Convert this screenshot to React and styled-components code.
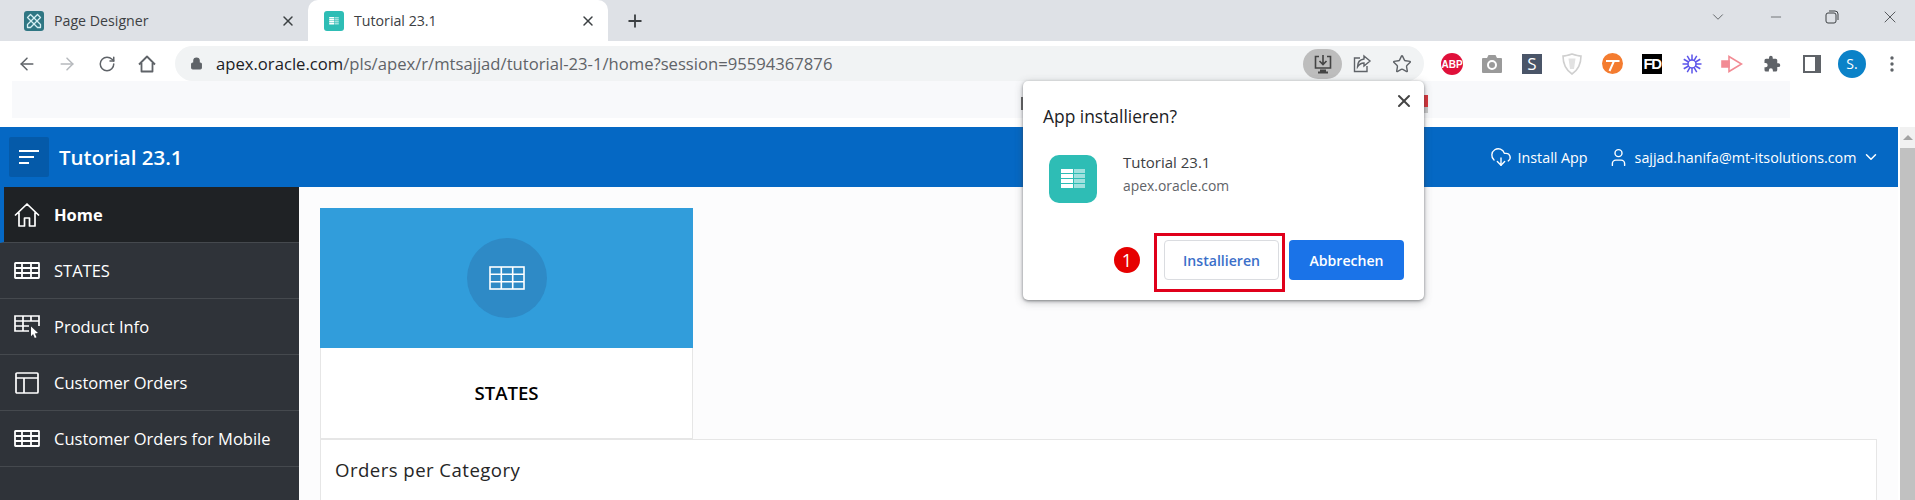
import React from 'react';
import styled, { createGlobalStyle } from 'styled-components';
import { ArrowLeft, ArrowRight, RotateCw, Lock, Star, X, Plus, ChevronDown, Minus, CloudDownload, User } from 'lucide-react';

const GlobalStyle = createGlobalStyle`
    html, body {
        margin: 0;
        padding: 0;
        height: 500px;
        overflow: hidden;
        background: #fff;
        font-family: "Open Sans", "Liberation Sans", sans-serif;
    }
    * {
        box-sizing: border-box;
    }
`;

const Screen = styled.div`
    position: relative;
    width: 1915px;
    height: 500px;
    overflow: hidden;
`;

/* browser tabs */
const TabStrip = styled.div`
    display: flex;
    align-items: stretch;
    height: 41px;
    background: #dee1e6;
    padding-left: 8px;
`;

const Tab = styled.div`
    display: flex;
    align-items: center;
    width: 300px;
    padding: 0 12px 0 16px;
    font-size: 14.2px;
    color: #3c4043;
    background: ${p => (p.$active ? '#fff' : 'transparent')};
    border-radius: 10px 10px 0 0;
`;

const TabTitle = styled.span`
    flex: 1;
    margin-left: 10px;
`;

const Favicon = styled.div`
    display: flex;
    align-items: center;
    justify-content: center;
    width: 20px;
    height: 20px;
    border-radius: 3px;
    background: ${p => p.$color};
`;

const NewTab = styled.div`
    display: flex;
    align-items: center;
    margin-left: 17px;
    color: #3c4043;
`;

const WindowControls = styled.div`
    display: flex;
    align-items: center;
    margin-left: auto;
    padding: 0 15px 7px 0;
    gap: 41px;
    color: #3c4043;
`;

/* address bar row */
const Toolbar = styled.div`
    display: flex;
    align-items: flex-start;
    height: 40px;
    padding: 5px 0 0 7px;
    background: #fff;
`;

const NavButton = styled.div`
    display: flex;
    align-items: center;
    justify-content: center;
    flex: none;
    width: 40px;
    height: 35px;
    color: ${p => (p.$muted ? '#b6b9bd' : '#5f6368')};
`;

const AddressBar = styled.div`
    display: flex;
    align-items: center;
    width: 1249px;
    height: 35px;
    margin: 0 8px;
    padding: 0 2px 0 15px;
    border-radius: 18px;
    background: #f1f3f4;
`;

const Url = styled.div`
    flex: 1;
    margin-left: 13px;
    font-size: 16.65px;
    color: #5f6368;
    white-space: nowrap;
    b {
        font-weight: 400;
        color: #202124;
    }
`;

const InstallPill = styled.div`
    display: flex;
    align-items: center;
    justify-content: center;
    width: 39px;
    height: 30px;
    border-radius: 15px;
    background: #bdbdbd;
`;

const BarIcon = styled.div`
    display: flex;
    align-items: center;
    justify-content: center;
    width: 40px;
    color: #5f6368;
`;

const Extensions = styled.div`
    display: flex;
`;

const Extension = styled.div`
    display: flex;
    align-items: center;
    justify-content: center;
    width: 40px;
    height: 35px;
`;

const Avatar = styled.div`
    display: flex;
    align-items: center;
    justify-content: center;
    width: 28px;
    height: 28px;
    border-radius: 50%;
    background: #0b82c8;
    color: #fff;
    font-size: 14px;
`;

const AdStrip = styled.div`
    position: relative;
    height: 46px;
    padding: 0 125px 9px 12px;
`;

const AdInner = styled.div`
    height: 100%;
    background: #f8f9fb;
`;

/* the bits of the page's banner that stick out beside the prompt */
const AdMark = styled.div`
    position: absolute;
    top: ${p => p.$top}px;
    left: ${p => p.$left}px;
    width: ${p => p.$w}px;
    height: ${p => p.$h}px;
    background: ${p => p.$color};
`;

/* page under the chrome */
const Viewport = styled.div`
    display: flex;
    height: 373px;
`;

const PageArea = styled.div`
    width: 1898px;
`;

const AppHeader = styled.header`
    display: flex;
    align-items: center;
    height: 60px;
    padding: 0 14px 0 9px;
    background: #0568c4;
    color: #fff;
`;

const MenuButton = styled.div`
    display: flex;
    align-items: center;
    justify-content: center;
    width: 40px;
    height: 40px;
    border-radius: 2px;
    background: #055aa9;
`;

const AppTitle = styled.div`
    margin-left: 10px;
    font-size: 20.5px;
    font-weight: 600;
`;

const HeaderLink = styled.div`
    display: flex;
    align-items: center;
    gap: 6px;
    margin-left: ${p => p.$offset || 0}px;
    font-size: 14.3px;
`;

const Body = styled.div`
    display: flex;
    height: 313px;
`;

const Sidebar = styled.nav`
    flex: none;
    width: 299px;
    background: #2f3339;
`;

const MenuRow = styled.div`
    display: flex;
    align-items: center;
    height: 56px;
    padding-left: ${p => (p.$active ? '10px' : '14px')};
    border-left: ${p => (p.$active ? '4px solid #0568c4' : '0')};
    border-bottom: 1px solid #45494e;
    background: ${p => (p.$active ? '#1f2225' : 'transparent')};
    color: #fff;
    font-size: 16.5px;
    font-weight: ${p => (p.$active ? 700 : 400)};
`;

const MenuIcon = styled.div`
    display: flex;
    align-items: center;
    justify-content: center;
    width: 26px;
    margin-right: 14px;
`;

const Content = styled.main`
    flex: 1;
    padding: 21px 21px 0;
    background: #fcfcfd;
`;

const Tile = styled.div`
    width: 373px;
    height: 231px;
    background: #fff;
    border: 1px solid #e6e6e6;
    border-top: 0;
`;

const TileBanner = styled.div`
    display: flex;
    align-items: center;
    justify-content: center;
    height: 140px;
    margin: 0 -1px;
    background: #319ddb;
`;

const TileCircle = styled.div`
    display: flex;
    align-items: center;
    justify-content: center;
    width: 80px;
    height: 80px;
    border-radius: 50%;
    background: #2e8ac6;
`;

const TileLabel = styled.div`
    padding-top: 33px;
    text-align: center;
    font-size: 18.6px;
    line-height: 24px;
    font-weight: 600;
    color: #000;
`;

const Region = styled.section`
    height: 120px;
    padding: 17px 14px;
    background: #fff;
    border: 1px solid #e6e6e6;
`;

const RegionTitle = styled.h2`
    margin: 0;
    font-size: 18.6px;
    line-height: 26px;
    font-weight: 500;
    letter-spacing: 0.45px;
    color: #262626;
`;

const Scrollbar = styled.div`
    width: 15px;
    margin-left: 2px;
    background: #c1c1c1;
`;

const ScrollUp = styled.div`
    display: flex;
    align-items: center;
    justify-content: center;
    height: 21px;
    background: #f1f1f1;
    &::before {
        content: '';
        border: 5px solid transparent;
        border-top: 0;
        border-bottom: 5px solid #a3a3a3;
    }
`;

/* install prompt, on top of everything */
const Dialog = styled.div`
    position: absolute;
    left: 1023px;
    top: 81px;
    width: 401px;
    height: 219px;
    padding: 23px 20px 0 20px;
    border-radius: 5px;
    background: #fff;
    box-shadow: 0 1px 3px rgba(60, 64, 67, 0.55), 0 2px 8px rgba(60, 64, 67, 0.3);
`;

const DialogClose = styled.div`
    position: absolute;
    top: 10px;
    right: 10px;
    display: flex;
    color: #444;
`;

const DialogTitle = styled.div`
    font-size: 17.4px;
    line-height: 24px;
    color: #202124;
`;

const AppRow = styled.div`
    display: flex;
    align-items: flex-start;
    height: 48px;
    margin: 27px 0 0 6px;
`;

const AppIcon = styled.div`
    display: flex;
    align-items: center;
    justify-content: center;
    width: 48px;
    height: 48px;
    border-radius: 10px;
    background: #2ebdb5;
`;

const AppText = styled.div`
    margin: -5px 0 0 26px;
`;

const AppName = styled.div`
    font-size: 15px;
    line-height: 24px;
    color: #3c4043;
`;

const AppHost = styled.div`
    font-size: 13.9px;
    line-height: 24px;
    color: #5f6368;
`;

const DialogActions = styled.div`
    display: flex;
    align-items: flex-start;
    justify-content: flex-end;
    margin-top: 30px;
`;

const StepBadge = styled.div`
    display: flex;
    align-items: center;
    justify-content: center;
    width: 26px;
    height: 26px;
    margin-top: 14px;
    border-radius: 50%;
    background: #e60000;
    color: #fff;
    font-size: 18px;
`;

const Highlight = styled.div`
    height: 59px;
    margin-left: 14px;
    padding: 4px 3px 0 7px;
    border: 3px solid #e0001b;
`;

const Button = styled.div`
    display: flex;
    align-items: center;
    justify-content: center;
    width: 115px;
    height: 40px;
    border-radius: 4px;
    font-size: 14.1px;
    font-weight: 600;
    color: ${p => (p.$primary ? '#fff' : '#3b6fc9')};
    background: ${p => (p.$primary ? '#1a73e8' : '#fff')};
    border: ${p => (p.$primary ? '0' : '1px solid #dadce0')};
`;

const CancelButton = styled(Button)`
    margin: 7px 0 0 4px;
`;

/* list glyph of the side menu: wide first column, thick rules */
const MenuTableGlyph = () => (
    <svg width="26" height="17" viewBox="0 0 26 17" fill="none" stroke="#fff" strokeWidth="1.8">
        <rect x="1" y="1" width="24" height="15" rx="0.5" />
        <path d="M1 6h24M1 11h24M8 1v15M17 1v15" />
    </svg>
);

const TileTableGlyph = () => (
    <svg width="36" height="24" viewBox="0 0 36 24" fill="none" stroke="#fff" strokeWidth="1.6">
        <rect x="1" y="1" width="34" height="22" />
        <path d="M1 8.300h34M1 15.700h34M12.300 1v22M23.700 1v22" />
    </svg>
);

const TinyTableGlyph = ({ width, height }) => (
    <svg width={width} height={height} viewBox="0 0 24 20" fill="#fff">
        <path d="M0 0h12v4H0zM0 5h12v4H0zM0 10h12v4H0zM0 15h12v4H0z" />
        <path d="M13 0h11v4H13zM13 5h11v4H13zM13 10h11v4H13zM13 15h11v4H13z" opacity="0.55" />
    </svg>
);

const HouseGlyph = () => (
    <svg width="26" height="24" viewBox="0 0 26 24" fill="none" stroke="#fff" strokeWidth="1.7" strokeLinejoin="round">
        <path d="M1 12.500L13 1l12 11.500M5 9.500V23h5.500v-8h5v8H21V9.500" />
    </svg>
);

const ToolbarHouseGlyph = () => (
    <svg width="18" height="18" viewBox="0 0 18 18" fill="none" stroke="#5f6368" strokeWidth="1.8" strokeLinejoin="round">
        <path d="M1 9.500L9 1.500l8 8M3.500 8v8.500h11V8" />
    </svg>
);

const CursorTableGlyph = () => (
    <svg width="26" height="24" viewBox="0 0 26 24" fill="none" stroke="#fff" strokeWidth="1.7">
        <path d="M15 16H1V1h24v10M1 6h24M1 11h14M9 1v15M17 1v5" />
        <path d="M17 11.500l7 6.500-3.200.4 1.700 3.800-1.700.8-1.700-3.900-2.100 2.200z" fill="#fff" stroke="none" />
    </svg>
);

const LayoutGlyph = () => (
    <svg width="24" height="22" viewBox="0 0 24 22" fill="none" stroke="#fff" strokeWidth="1.7">
        <rect x="1" y="1" width="22" height="20" rx="1" />
        <path d="M1 6h22M9 6v15" />
    </svg>
);

const InstallGlyph = () => (
    <svg width="20" height="20" viewBox="0 0 20 20" fill="none" stroke="#444" strokeWidth="1.6">
        <path d="M6 2.500H2.500V14h15V2.500H14" />
        <path d="M10 1v9M6.500 7l3.500 3.500L13.500 7" />
        <path d="M5 18.500h10M7 16.500h6" strokeWidth="2" />
    </svg>
);

const ShareGlyph = () => (
    <svg width="20" height="20" viewBox="0 0 20 20" fill="none" stroke="#5f6368" strokeWidth="1.4">
        <path d="M8 4H2.500v13.500H15V12" />
        <path d="M12 2l6 5-6 5V9C9 9 7 10.500 5.500 13c0-5 2.500-7.500 6.500-8z" />
    </svg>
);

const AbpGlyph = () => (
    <svg width="22" height="22" viewBox="0 0 22 22">
        <circle cx="11" cy="11" r="11" fill="#e0103a" />
        <text x="11" y="14.500" textAnchor="middle" fontSize="10" fontWeight="700" fill="#fff" fontFamily="Liberation Sans">ABP</text>
    </svg>
);

const CameraGlyph = () => (
    <svg width="20" height="18" viewBox="0 0 20 18">
        <path d="M1 3h4l1.500-3h7L15 3h4a1 1 0 0 1 1 1v13a1 1 0 0 1-1 1H1a1 1 0 0 1-1-1V4a1 1 0 0 1 1-1z" fill="#9a9a9a" />
        <circle cx="10" cy="10" r="4" fill="none" stroke="#fff" strokeWidth="2" />
    </svg>
);

const SquareS = styled.div`
    display: flex;
    align-items: center;
    justify-content: center;
    width: 20px;
    height: 20px;
    background: #4a5568;
    color: #fff;
    font-size: 17px;
`;

const ShieldGlyph = () => (
    <svg width="20" height="22" viewBox="0 0 20 22" fill="none" stroke="#cfcfcf" strokeWidth="1.6">
        <path d="M1 3c3 0 6-1 9-2 3 1 6 2 9 2 0 8-3 14-9 18C4 17 1 11 1 3z" />
        <path d="M6.500 5.500h7L12 16H8z" fill="#e2e2e2" stroke="none" />
    </svg>
);

const TGlyph = () => (
    <svg width="21" height="21" viewBox="0 0 21 21">
        <circle cx="10.500" cy="10.500" r="10.500" fill="#f47c30" />
        <path d="M4 8h13.500M12 8L7.500 18" fill="none" stroke="#fff" strokeWidth="2" />
    </svg>
);

const FdBox = styled.div`
    display: flex;
    align-items: center;
    justify-content: center;
    width: 20px;
    height: 20px;
    background: #000;
    color: #fff;
    font: 700 15px/1 "Liberation Sans", sans-serif;
    letter-spacing: -1.5px;
`;

const spokes = Array.from({ length: 12 }, (_, i) => i * 30);

const BurstGlyph = () => (
    <svg width="20" height="20" viewBox="0 0 20 20" fill="none" stroke="#5b54ea" strokeWidth="2">
        <circle cx="10" cy="10" r="4" strokeWidth="1.500" />
        {spokes.map(deg => <path key={deg} d="M10 0.500V6" transform={`rotate(${deg} 10 10)`} strokeWidth="1.500" />)}
    </svg>
);

const ArrowTagGlyph = () => (
    <svg width="22" height="18" viewBox="0 0 22 18" fill="none" stroke="#f28b94" strokeWidth="1.6">
        <path d="M1 6h7v6H1z" fill="#f28b94" />
        <path d="M8 1.500L20.500 9 8 16.500z" />
    </svg>
);

const PuzzleGlyph = () => (
    <svg width="18" height="18" viewBox="0 0 24 24" fill="#5f6368">
        <path d="M20.500 11H19V7a2 2 0 0 0-2-2h-4V3.500a2.500 2.500 0 0 0-5 0V5H4a2 2 0 0 0-2 2v3.800h1.500a2.700 2.700 0 0 1 0 5.400H2V20a2 2 0 0 0 2 2h3.800v-1.500a2.700 2.700 0 0 1 5.400 0V22H17a2 2 0 0 0 2-2v-4h1.500a2.500 2.500 0 0 0 0-5z" />
    </svg>
);

const SidePanelGlyph = () => (
    <svg width="18" height="18" viewBox="0 0 18 18">
        <path d="M0 0h18v18H0z" fill="#5f6368" />
        <path d="M2 2h10v14H2z" fill="#fff" />
    </svg>
);

const DotsGlyph = () => (
    <svg width="4" height="16" viewBox="0 0 4 16" fill="#5f6368">
        <circle cx="2" cy="2" r="1.700" />
        <circle cx="2" cy="8" r="1.700" />
        <circle cx="2" cy="14" r="1.700" />
    </svg>
);

const RestoreGlyph = () => (
    <svg width="14" height="14" viewBox="0 0 14 14" fill="none" stroke="#3c4043" strokeWidth="1">
        <rect x="1" y="3" width="10" height="10" rx="2" />
        <path d="M4 1h6a3 3 0 0 1 3 3v6" />
    </svg>
);

const BurgerGlyph = () => (
    <svg width="20" height="16" viewBox="0 0 20 16" fill="#fff">
        <rect width="20" height="2" y="1" />
        <rect width="15" height="2" y="7" />
        <rect width="10" height="2" y="13" />
    </svg>
);

/* crossed pencil and ruler */
const PageDesignerGlyph = () => (
    <svg width="16" height="16" viewBox="0 0 16 16" fill="none" stroke="#d5eef2" strokeWidth="1.300" strokeLinejoin="round">
        <path d="M1.500 4.500l3-3 10 10v3h-3z" />
        <path d="M14.500 4.500l-3-3-10 10v3h3z" />
    </svg>
);

const menuItems = [
    { label: 'Home', icon: <HouseGlyph />, active: true },
    { label: 'STATES', icon: <MenuTableGlyph /> },
    { label: 'Product Info', icon: <CursorTableGlyph /> },
    { label: 'Customer Orders', icon: <LayoutGlyph /> },
    { label: 'Customer Orders for Mobile', icon: <MenuTableGlyph /> },
];

const extensions = [
    <AbpGlyph />,
    <CameraGlyph />,
    <SquareS>S</SquareS>,
    <ShieldGlyph />,
    <TGlyph />,
    <FdBox>FD</FdBox>,
    <BurstGlyph />,
    <ArrowTagGlyph />,
    <PuzzleGlyph />,
    <SidePanelGlyph />,
    <Avatar>S.</Avatar>,
    <DotsGlyph />,
];

export default function App() {
    return (
        <Screen>
            <GlobalStyle />
            <TabStrip>
                <Tab>
                    <Favicon $color="#2f7683"><PageDesignerGlyph /></Favicon>
                    <TabTitle>Page Designer</TabTitle>
                    <X size={16} strokeWidth={2.2} />
                </Tab>
                <Tab $active>
                    <Favicon $color="#2ebdb5"><TinyTableGlyph width={10} height={8} /></Favicon>
                    <TabTitle>Tutorial 23.1</TabTitle>
                    <X size={16} strokeWidth={2.2} />
                </Tab>
                <NewTab><Plus size={20} strokeWidth={2.2} /></NewTab>
                <WindowControls>
                    <ChevronDown size={18} strokeWidth={1} />
                    <Minus size={16} strokeWidth={1} />
                    <RestoreGlyph />
                    <X size={20} strokeWidth={1} />
                </WindowControls>
            </TabStrip>

            <Toolbar>
                <NavButton><ArrowLeft size={20} strokeWidth={1.8} /></NavButton>
                <NavButton $muted><ArrowRight size={20} strokeWidth={1.8} /></NavButton>
                <NavButton><RotateCw size={18} strokeWidth={2} /></NavButton>
                <NavButton><ToolbarHouseGlyph /></NavButton>
                <AddressBar>
                    <Lock size={13} fill="#5f6368" color="#5f6368" />
                    <Url><b>apex.oracle.com</b>/pls/apex/r/mtsajjad/tutorial-23-1/home?session=95594367876</Url>
                    <InstallPill><InstallGlyph /></InstallPill>
                    <BarIcon><ShareGlyph /></BarIcon>
                    <BarIcon><Star size={20} strokeWidth={1.7} /></BarIcon>
                </AddressBar>
                <Extensions>
                    {extensions.map((ext, i) => <Extension key={i}>{ext}</Extension>)}
                </Extensions>
            </Toolbar>

            <AdStrip>
                <AdInner />
                <AdMark $left={1021} $top={16} $w={2} $h={13} $color="#666" />
                <AdMark $left={1424} $top={14} $w={4} $h={12} $color="#d9343a" />
                <AdMark $left={1424} $top={26} $w={4} $h={6} $color="#c9c9c9" />
            </AdStrip>

            <Viewport>
                <PageArea>
                    <AppHeader>
                        <MenuButton><BurgerGlyph /></MenuButton>
                        <AppTitle>Tutorial 23.1</AppTitle>
                        <HeaderLink $offset={1307}><CloudDownload size={22} strokeWidth={1.5} />Install App</HeaderLink>
                        <HeaderLink $offset={20}><User size={21} strokeWidth={1.6} />sajjad.hanifa@mt-itsolutions.com<ChevronDown size={18} strokeWidth={2} /></HeaderLink>
                    </AppHeader>
                    <Body>
                        <Sidebar>
                            {menuItems.map(item => (
                                <MenuRow key={item.label} $active={item.active}>
                                    <MenuIcon>{item.icon}</MenuIcon>
                                    {item.label}
                                </MenuRow>
                            ))}
                        </Sidebar>
                        <Content>
                            <Tile>
                                <TileBanner>
                                    <TileCircle><TileTableGlyph /></TileCircle>
                                </TileBanner>
                                <TileLabel>STATES</TileLabel>
                            </Tile>
                            <Region>
                                <RegionTitle>Orders per Category</RegionTitle>
                            </Region>
                        </Content>
                    </Body>
                </PageArea>
                <Scrollbar><ScrollUp /></Scrollbar>
            </Viewport>

            <Dialog>
                <DialogClose><X size={20} strokeWidth={2.4} /></DialogClose>
                <DialogTitle>App installieren?</DialogTitle>
                <AppRow>
                    <AppIcon><TinyTableGlyph width={24} height={20} /></AppIcon>
                    <AppText>
                        <AppName>Tutorial 23.1</AppName>
                        <AppHost>apex.oracle.com</AppHost>
                    </AppText>
                </AppRow>
                <DialogActions>
                    <StepBadge>1</StepBadge>
                    <Highlight>
                        <Button>Installieren</Button>
                    </Highlight>
                    <CancelButton $primary>Abbrechen</CancelButton>
                </DialogActions>
            </Dialog>
        </Screen>
    );
}
